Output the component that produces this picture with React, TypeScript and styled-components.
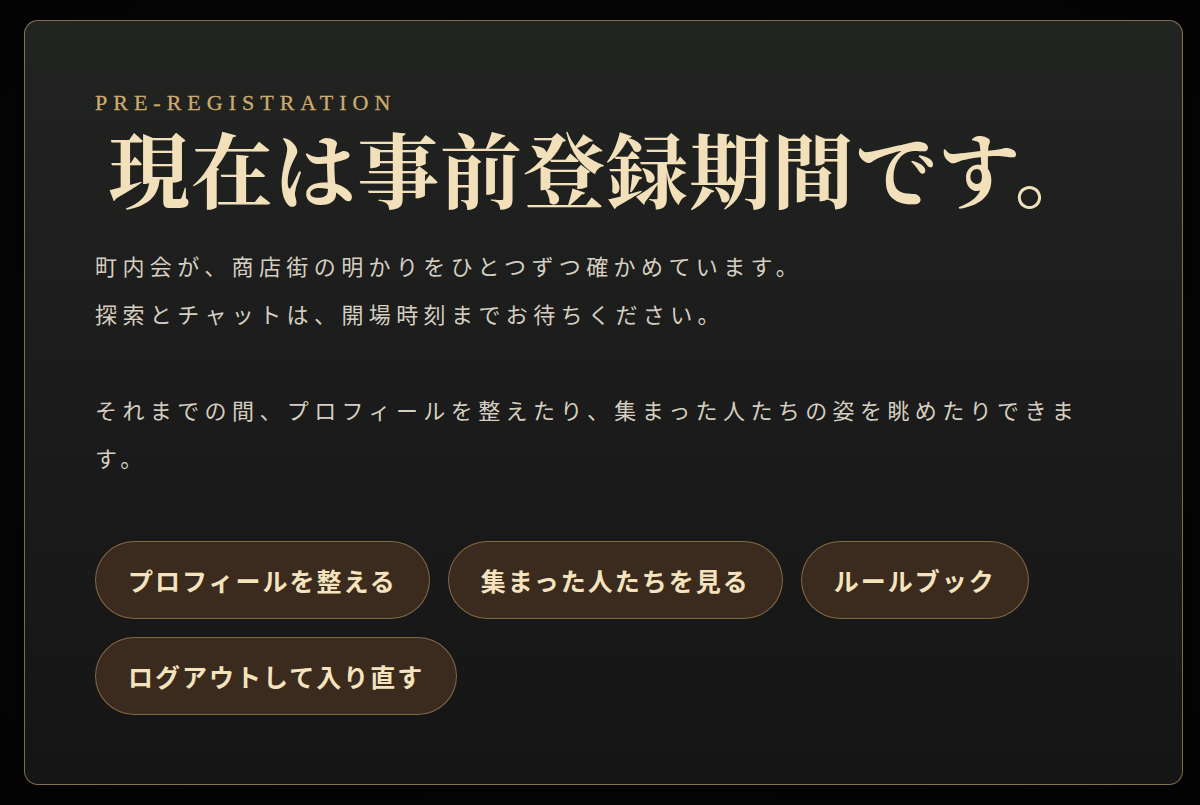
import React from "react";
import styled, { createGlobalStyle } from "styled-components";

const GlobalStyle = createGlobalStyle`
  html, body {
    margin: 0;
    padding: 0;
    background: #060505;
  }
  * {
    box-sizing: border-box;
  }
`;

const Page = styled.div`
  min-height: 805px;
  padding: 20px 17px 22px 24px;
  background: radial-gradient(ellipse at center, #0b0a09 0%, #050404 100%);
`;

const Card = styled.section`
  border: 1px solid rgba(196, 166, 116, 0.6);
  border-radius: 14px;
  background: linear-gradient(180deg, #222422 0%, #1b1c1b 45%, #151515 100%);
  padding: 70px 70px 69px 70px;
  box-shadow: 0 10px 40px rgba(0, 0, 0, 0.6);
`;

const Eyebrow = styled.div`
  font-family: "Liberation Serif", "Noto Serif", serif;
  font-size: 22px;
  line-height: 24px;
  letter-spacing: 6px;
  color: #cfaa6f;
  -webkit-text-stroke: 0.3px #cfaa6f;
`;

const Title = styled.h1`
  margin: 2px 0 0 13px;
  font-family: "Noto Serif CJK JP", "Noto Sans CJK JP", serif;
  font-weight: 700;
  font-size: 82px;
  line-height: 100px;
  letter-spacing: 1px;
  color: #f1e0b9;
`;

const Lead = styled.p`
  margin: 24px 0 0;
  font-family: "Noto Sans CJK JP", sans-serif;
  font-size: 22px;
  line-height: 48px;
  letter-spacing: 5.4px;
  color: #d6cfc1;
  white-space: pre-line;
`;

const Actions = styled.div`
  display: flex;
  flex-wrap: wrap;
  gap: 18px;
  margin-top: 60px;
`;

const Pill = styled.button`
  height: 78px;
  padding: 0 32px;
  border: 1px solid rgba(190, 155, 104, 0.55);
  border-radius: 39px;
  background: #3a2b1e;
  color: #f5e3bd;
  font-family: "Noto Sans CJK JP", sans-serif;
  font-weight: 700;
  font-size: 25px;
  letter-spacing: 2px;
  cursor: pointer;
`;

const actions = [
  "プロフィールを整える",
  "集まった人たちを見る",
  "ルールブック",
  "ログアウトして入り直す",
];

export default function App() {
  return (
    <>
      <GlobalStyle />
      <Page>
        <Card>
          <Eyebrow>PRE-REGISTRATION</Eyebrow>
          <Title>現在は事前登録期間です。</Title>
          <Lead>
            {"町内会が、商店街の明かりをひとつずつ確かめています。\n探索とチャットは、開場時刻までお待ちください。\n\nそれまでの間、プロフィールを整えたり、集まった人たちの姿を眺めたりできます。"}
          </Lead>
          <Actions>
            {actions.map((label) => (
              <Pill key={label}>{label}</Pill>
            ))}
          </Actions>
        </Card>
      </Page>
    </>
  );
}
